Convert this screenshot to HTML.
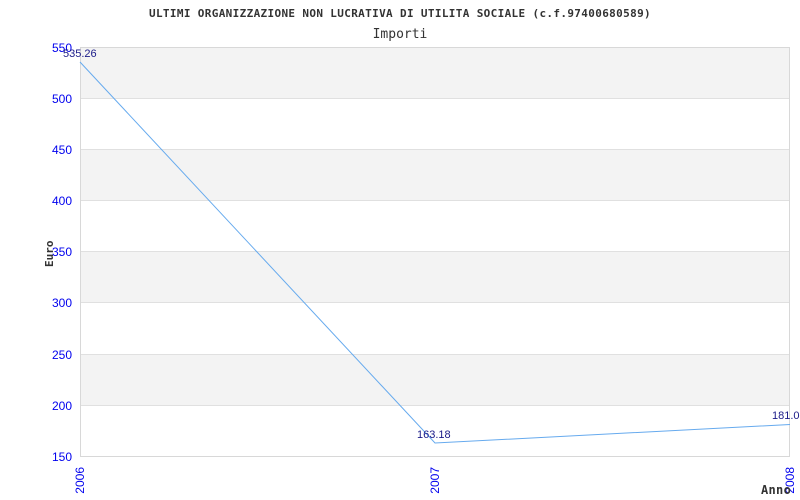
<!DOCTYPE html>
<html><head><meta charset="utf-8"><style>
html,body{margin:0;padding:0;background:#fff;}
svg{display:block}
</style></head><body>
<svg width="800" height="500" xmlns="http://www.w3.org/2000/svg">
<rect width="800" height="500" fill="#fff"/>
<text x="400" y="17" text-anchor="middle" font-family="DejaVu Sans Mono, monospace" font-size="11" font-weight="bold" letter-spacing="0.35" fill="#333">ULTIMI ORGANIZZAZIONE NON LUCRATIVA DI UTILITA SOCIALE (c.f.97400680589)</text>
<text x="400" y="38" text-anchor="middle" font-family="DejaVu Sans Mono, monospace" font-size="13" fill="#333">Importi</text>
<g fill="#f3f3f3">
<rect x="80" y="47" width="710" height="51"/>
<rect x="80" y="149" width="710" height="51"/>
<rect x="80" y="251" width="710" height="51"/>
<rect x="80" y="354" width="710" height="51"/>
</g>
<g stroke="#e0e0e0" stroke-width="1">
<line x1="80" y1="98.5" x2="790" y2="98.5"/>
<line x1="80" y1="149.5" x2="790" y2="149.5"/>
<line x1="80" y1="200.5" x2="790" y2="200.5"/>
<line x1="80" y1="251.5" x2="790" y2="251.5"/>
<line x1="80" y1="302.5" x2="790" y2="302.5"/>
<line x1="80" y1="354.5" x2="790" y2="354.5"/>
<line x1="80" y1="405.5" x2="790" y2="405.5"/>
</g>
<rect x="80.5" y="47.5" width="709" height="409" fill="none" stroke="#d8d8d8"/>
<g font-family="Liberation Sans, sans-serif" font-size="12" fill="#0000ee" text-anchor="end">
<text x="72" y="52">550</text>
<text x="72" y="103">500</text>
<text x="72" y="154">450</text>
<text x="72" y="205">400</text>
<text x="72" y="256">350</text>
<text x="72" y="307">300</text>
<text x="72" y="359">250</text>
<text x="72" y="410">200</text>
<text x="72" y="461">150</text>
</g>
<g font-family="Liberation Sans, sans-serif" font-size="12" fill="#0000ee" text-anchor="end">
<text transform="translate(84,467) rotate(-90)">2006</text>
<text transform="translate(439,467) rotate(-90)">2007</text>
<text transform="translate(794,467) rotate(-90)">2008</text>
</g>
<text transform="translate(53,267) rotate(-90)" font-family="DejaVu Sans Mono, monospace" font-size="11" font-weight="bold" fill="#333">Euro</text>
<text x="761" y="494" font-family="DejaVu Sans Mono, monospace" font-size="12" font-weight="bold" letter-spacing="0.3" fill="#333">Anno</text>
<polyline points="80,62 435,443 790,424.5" fill="none" stroke="#66aaee" stroke-width="1"/>
<g font-family="Liberation Sans, sans-serif" font-size="11" fill="#1a1a88">
<text x="63" y="57">535.26</text>
<text x="417" y="438">163.18</text>
<text x="772" y="419">181.00</text>
</g>
</svg>
</body></html>
